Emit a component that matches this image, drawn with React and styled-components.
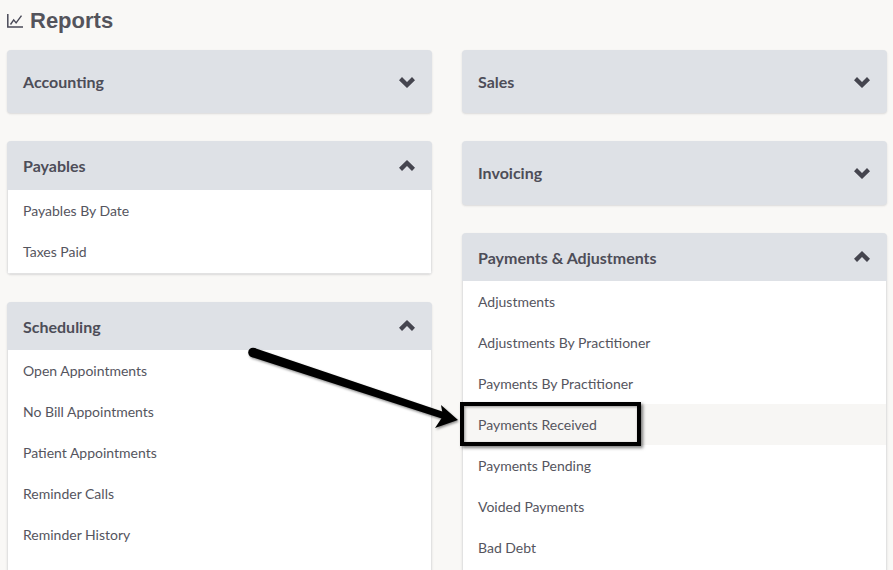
import React from "react";
import styled, { createGlobalStyle } from "styled-components";

const GlobalStyle = createGlobalStyle`
  html, body {
    margin: 0;
    height: 570px;
    overflow: hidden;
    background: #f9f8f6;
  }
`;

const Page = styled.div`
  position: relative;
  width: 893px;
  height: 570px;
  overflow: hidden;
  font-family: "Lato", "Liberation Sans", sans-serif;
  color: #4a4a55;
`;

const Title = styled.h1`
  display: flex;
  align-items: center;
  gap: 7px;
  height: 42px;
  margin: 0 0 8px;
  padding-left: 7px;
  font-family: "Liberation Sans", sans-serif;
  font-size: 22px;
  font-weight: 700;
  color: #54545c;
`;

const Columns = styled.div`
  display: grid;
  grid-template-columns: 425px 425px;
  column-gap: 30px;
  padding-left: 7px;
`;

const Column = styled.div`
  display: flex;
  flex-direction: column;
  gap: 28px;
`;

const Panel = styled.section`
  border-radius: 4px;
  background: #dee1e6;
  box-shadow: 0 1px 2px rgba(60, 60, 70, 0.16);
  overflow: hidden;
`;

const Header = styled.div`
  display: flex;
  align-items: center;
  justify-content: space-between;
  height: ${props => props.$height}px;
  margin-bottom: ${props => props.$extra || 0}px;
  padding: 0 16px;
  font-size: 16px;
  font-weight: 700;
  color: #4d4d58;
`;

const Chevron = styled.svg`
  display: block;
  margin-right: 1px;
  transform: ${props => (props.$up ? "rotate(180deg)" : "none")};
`;

const Body = styled.div`
  padding-bottom: 1px;
  background: #fff;
  border: 1px solid #e2e2e2;
  border-top: 0;
`;

const Item = styled.div`
  display: flex;
  align-items: center;
  height: 41px;
  padding: 0 15px;
  font-size: 14px;
  color: #55555e;
  background: ${props => (props.$active ? "#f7f6f4" : "#fff")};
`;

const Callout = styled.div`
  position: absolute;
  left: 460px;
  top: 402px;
  width: 181px;
  height: 44px;
  box-sizing: border-box;
  border: 4px solid #000;
  box-shadow: 2px 2px 3px rgba(0, 0, 0, 0.5), inset 1px 1px 3px rgba(0, 0, 0, 0.4);
`;

const ArrowLayer = styled.svg`
  position: absolute;
  left: 240px;
  top: 340px;
  overflow: visible;
`;

function ReportPanel({ title, height, extra, items, active }) {
  return (
    <Panel>
      <Header $height={height} $extra={extra}>
        <span>{title}</span>
        <Chevron $up={!!items} width="16" height="12" viewBox="0 0 16 12">
          <path d="M0 4.2L3 1l5 4.9L13 1l3 3.2L8 12z" fill="#45454f" />
        </Chevron>
      </Header>
      {items && (
        <Body>
          {items.map((item, i) => (
            <Item key={i} $active={item === active}>{item}</Item>
          ))}
        </Body>
      )}
    </Panel>
  );
}

function ChartIcon() {
  return (
    <svg width="16" height="14" viewBox="0 0 16 14" fill="none" stroke="#4a4a58">
      <path d="M.8 0v13.1H16" strokeWidth="1.5" />
      <path d="M3.5 10.5l3.2-4.6 2.4 3L14.5 1.6" strokeWidth="1.4" />
    </svg>
  );
}

export default function App() {
  return (
    <Page>
      <GlobalStyle />
      <Title><ChartIcon />Reports</Title>
      <Columns>
        <Column>
          <ReportPanel title="Accounting" height={63} />
          <ReportPanel title="Payables" height={49} items={["Payables By Date", "Taxes Paid"]} />
          <ReportPanel
            title="Scheduling"
            height={48}
            items={["Open Appointments", "No Bill Appointments", "Patient Appointments", "Reminder Calls", "Reminder History", ""]}
          />
        </Column>
        <Column>
          <ReportPanel title="Sales" height={63} />
          <ReportPanel title="Invoicing" height={63} extra={1} />
          <ReportPanel
            title="Payments & Adjustments"
            height={48}
            active="Payments Received"
            items={["Adjustments", "Adjustments By Practitioner", "Payments By Practitioner", "Payments Received", "Payments Pending", "Voided Payments", "Bad Debt", ""]}
          />
        </Column>
      </Columns>
      <Callout />
      <ArrowLayer width="225" height="95" viewBox="0 0 225 95">
        <defs>
          <filter id="arrowShadow" x="-10%" y="-30%" width="120%" height="160%">
            <feDropShadow dx="1" dy="1.5" stdDeviation="1.1" floodColor="#000" floodOpacity="0.45" />
          </filter>
        </defs>
        <g filter="url(#arrowShadow)" fill="#000">
          <circle cx="13" cy="12.5" r="4.8" />
          <path d="M14.4 7.9L206 72.8 204 79.2 11.6 17.1Z" />
          <path d="M201 65L218 80 195 88 203 76Z" />
        </g>
      </ArrowLayer>
    </Page>
  );
}
